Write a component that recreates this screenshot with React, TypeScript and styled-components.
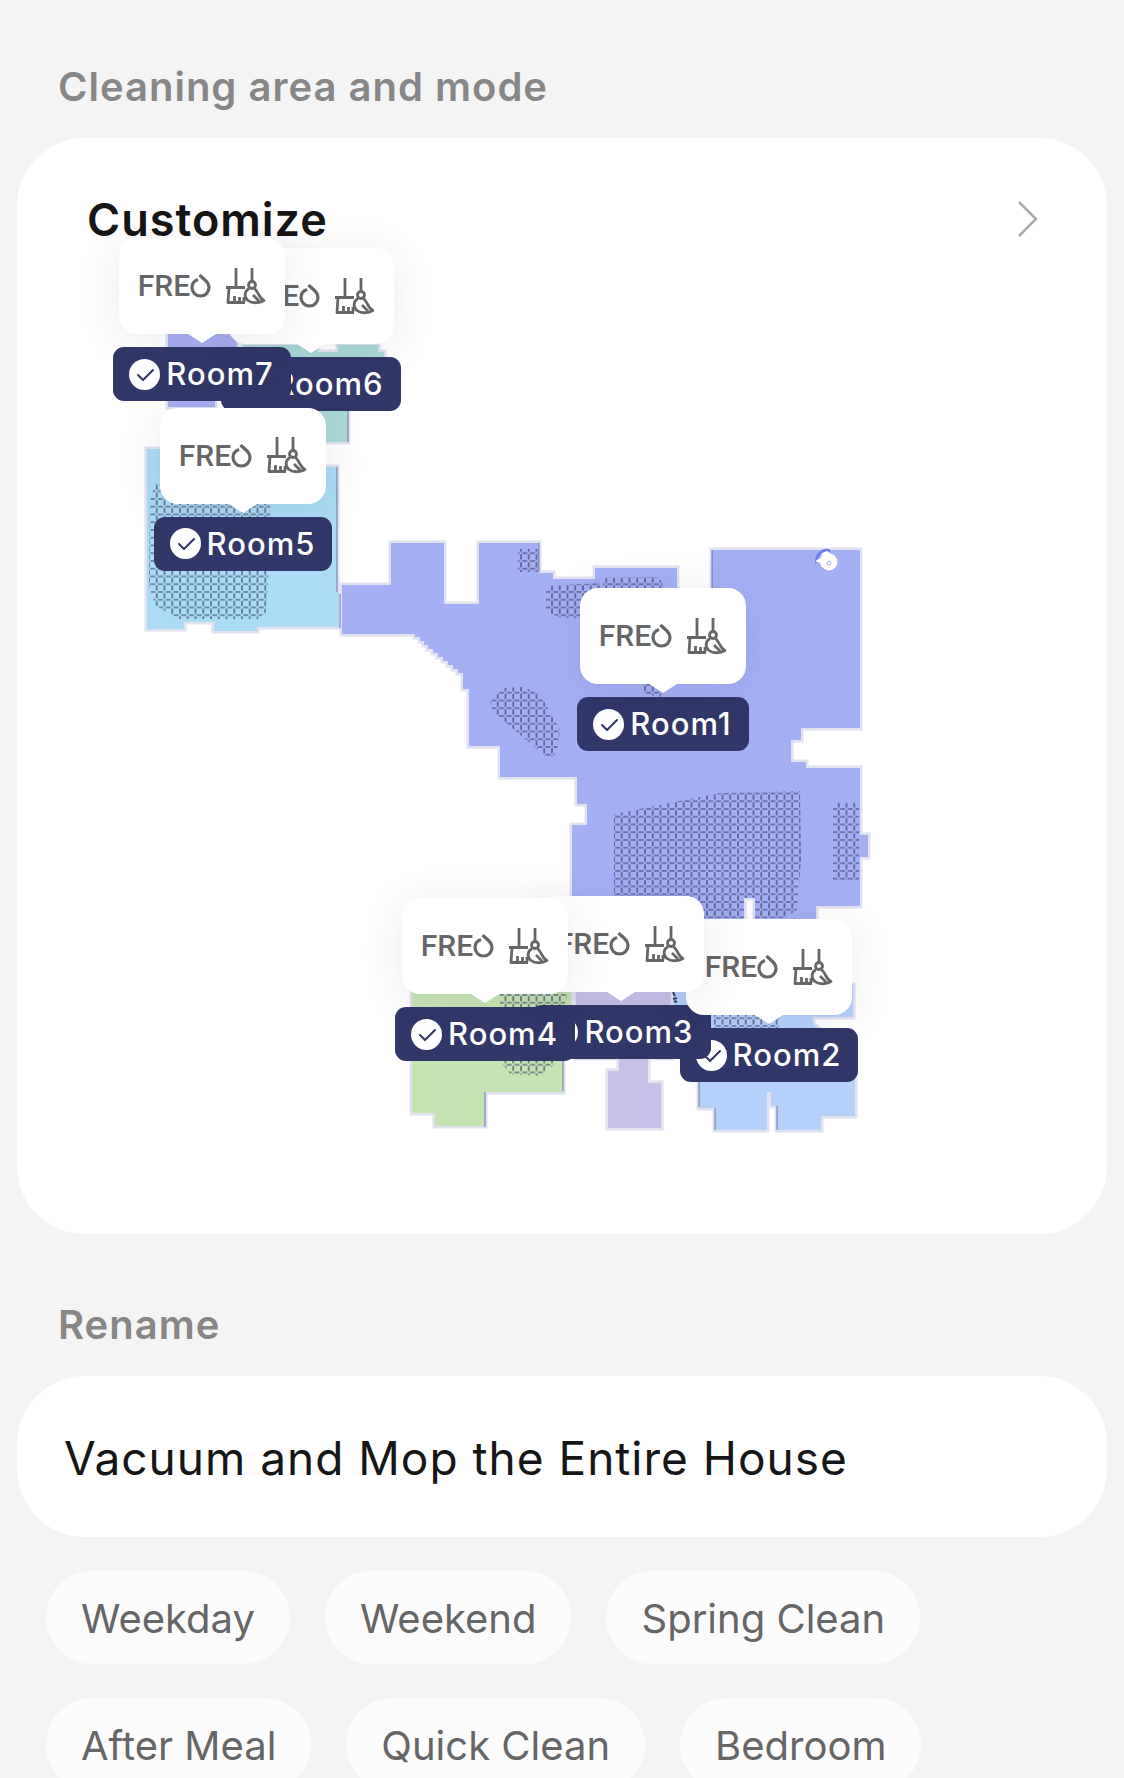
import React from 'react';
import styled, { createGlobalStyle } from 'styled-components';

const GlobalStyle = createGlobalStyle`
  * {
    box-sizing: border-box;
  }
  body {
    margin: 0;
    background: #f4f4f4;
    font-family: Inter, 'Liberation Sans', sans-serif;
  }
  button,
  input {
    font-family: inherit;
    border: none;
    margin: 0;
  }
`;

const Page = styled.main`
  padding: 63px 17px 34px;
`;

const Section = styled.section`
  & + & {
    margin-top: 67px;
  }
`;

const sectionTitle = `
  display: block;
  margin: 0 0 27px;
  padding: 0 41px;
  font-size: 40px;
  line-height: 48px;
  font-weight: 600;
  letter-spacing: 1px;
  color: #878787;
`;

const SectionTitle = styled.h2`
  ${sectionTitle}
`;

const SectionLabel = styled.label`
  ${sectionTitle}
`;

const Card = styled.div`
  background: #fff;
  border-radius: 68px;
`;

const CardHeader = styled.button`
  display: flex;
  align-items: center;
  justify-content: space-between;
  width: 100%;
  padding: 54px 68px 2px 70px;
  background: none;
  font-size: 45px;
  line-height: 56px;
  font-weight: 600;
  letter-spacing: 1px;
  color: #161616;
  text-align: left;
`;

const MapArea = styled.div`
  position: relative;
  > svg {
    display: block;
    width: 100%;
  }
`;

// zero width, so the callout and the tag both centre on the pin's x
const Pin = styled.div`
  position: absolute;
  display: flex;
  flex-direction: column;
  align-items: center;
  gap: 13px;
  width: 0;
`;

const Callout = styled.div`
  position: relative;
  z-index: 2;
  flex: none;
  display: flex;
  align-items: center;
  justify-content: center;
  gap: 15px;
  width: 166px;
  height: 96px;
  border-radius: 18px;
  background: #fff;
  box-shadow: 0 6px 44px rgba(40, 40, 90, 0.09);
  color: #666;
  &::after {
    content: '';
    position: absolute;
    top: 100%;
    left: 50%;
    margin-left: -14px;
    border: 14px solid transparent;
    border-top: 9px solid #fff;
    border-bottom: 0;
  }
`;

const Freo = styled.span`
  display: flex;
  align-items: center;
  font-family: Roboto, sans-serif;
  font-size: 30px;
  line-height: 32px;
  font-weight: 500;
`;

const RoomTag = styled.label`
  position: relative;
  z-index: 1;
  flex: none;
  display: flex;
  align-items: center;
  gap: 6px;
  height: 54px;
  padding: 0 17px 0 16px;
  border-radius: 11px;
  background: #313768;
  color: #fff;
  font-size: 31px;
  line-height: 36px;
  font-weight: 500;
  letter-spacing: 1px;
`;

const RoomCheck = styled.input`
  appearance: none;
  width: 31px;
  height: 31px;
  border-radius: 50%;
  background: #fff
    url("data:image/svg+xml,%3Csvg xmlns='http://www.w3.org/2000/svg' viewBox='0 0 31 31' fill='none' stroke='%23313768' stroke-width='2' stroke-linecap='round' stroke-linejoin='round'%3E%3Cpath d='M9 16l5 5 10-10'/%3E%3C/svg%3E");
`;

const NameInput = styled.input`
  display: block;
  width: 100%;
  height: 161px;
  padding: 2px 47px 0;
  border-radius: 68px;
  background: #fff;
  font-size: 46px;
  letter-spacing: 1px;
  color: #161616;
  outline: none;
`;

const Chips = styled.div`
  display: flex;
  flex-wrap: wrap;
  gap: 34px 35px;
  margin-top: 34px;
  padding: 0 29px;
`;

const Chip = styled.button`
  height: 93px;
  padding: 2px 35px 0;
  border-radius: 47px;
  background: #fcfcfc;
  font-size: 40px;
  color: #666;
`;

// map space: the drawing and the pins share these coordinates
const MAP = { x: 17, y: 250, width: 1090, height: 984 };

const rooms = [
  { name: 'Room1', x: 663, y: 588 },
  { name: 'Room2', x: 769, y: 919 },
  { name: 'Room3', x: 621, y: 896 },
  { name: 'Room4', x: 485, y: 898 },
  { name: 'Room5', x: 243, y: 408 },
  { name: 'Room6', x: 311, y: 248 },
  { name: 'Room7', x: 202, y: 238 },
];

const areas = [
  { fill: '#a8aef0', points: '168,320 230,320 237,345 237,375 215,375 215,407 168,407' },
  {
    fill: '#a9d9d6',
    points:
      '243,345 318,345 318,352 338,352 338,345 378,345 378,352 384,352 384,400 348,400 348,442 243,442',
  },
  {
    fill: '#abdbf5',
    points:
      '147,449 200,449 200,467 337,467 337,592 339,592 339,627 257,627 257,631 214,631 214,622 184,622 184,629 147,629',
  },
  {
    fill: '#a4aff4',
    points:
      '342,585 391,585 391,543 444,543 444,604 479,604 479,543 539,543 539,573 553,573 553,579 595,579 595,568 677,568 677,620 712,620 712,550 860,550 860,728 801,728 801,740 791,740 791,762 806,762 806,768 860,768 860,835 868,835 868,857 860,857 860,906 816,906 816,920 755,920 755,898 744,898 744,920 572,920 572,825 587,825 587,804 577,804 577,777 500,777 500,746 469,746 469,689 463,689 463,673 458,673 458,669 453,669 453,665 448,665 448,661 443,661 443,657 438,657 438,653 433,653 433,649 428,649 428,645 424,645 424,641 420,641 420,637 415,637 415,634 342,634',
  },
  {
    fill: '#c5e4b2',
    points: '412,990 571,990 571,1006 563,1006 563,1092 485,1092 485,1126 435,1126 435,1113 412,1113',
  },
  {
    fill: '#c8c0e8',
    points: '576,990 672,990 672,1058 648,1058 648,1083 661,1083 661,1128 608,1128 608,1071 619,1071 619,1058 576,1058',
  },
  {
    fill: '#b5d1fa',
    points:
      '673,985 853,985 853,1017 813,1017 813,1024 855,1060 855,1116 821,1116 821,1130 777,1130 777,1106 771,1106 771,1092 767,1092 767,1130 715,1130 715,1108 699,1108 699,1050 673,1050',
  },
];

const carpets = [
  '155,484 270,490 270,550 266,612 258,619 178,619 155,605 149,585 150,500',
  '518,549 538,549 538,572 518,572',
  '546,586 600,583 600,618 562,618 546,612',
  '603,578 657,577 663,583 663,592 603,592',
  '490,702 503,688 523,687 540,694 560,730 557,753 548,759 530,743 493,712',
  '614,814 660,805 720,793 800,791 801,860 797,910 784,918 755,918 755,898 744,898 744,918 614,918',
  '833,803 859,803 859,880 833,880',
  '643,684 668,684 660,697 645,694',
  '500,994 568,994 562,1012 554,1065 540,1076 510,1074 500,1060',
  '714,1012 779,1012 779,1028 714,1028',
];

// walls that are drawn darker than the soft room outline
const walls =
  'M348 405V442M337 467V592M340 594V628M539 543V572M712 550V600M485 1092V1127M563 1060V1091M699 1080V1107M715 1108V1130M777 1106V1130';

function FloorPlan() {
  return (
    <svg viewBox={`${MAP.x} ${MAP.y} ${MAP.width} ${MAP.height}`} aria-hidden="true">
      <defs>
        <pattern id="carpet" x="613" y="808" width="7.75" height="7.75" patternUnits="userSpaceOnUse">
          <path d="M2.300 1H7.200M1 2.300V7.200" stroke="#2f365c" strokeWidth="1.1" fill="none" />
        </pattern>
      </defs>
      {areas.map(area => (
        <polygon
          key={area.fill}
          points={area.points}
          fill={area.fill}
          stroke="#e0e2f0"
          strokeWidth="5"
          paintOrder="stroke"
        />
      ))}
      <path d={walls} stroke="#6d76ac" strokeWidth="1" />
      {carpets.map(points => (
        <polygon key={points} points={points} fill="url(#carpet)" />
      ))}
      <path d="M673 992l2 4m-2 3l4-1m-3 3l3 1" stroke="#39406b" strokeWidth="2" />
      <path d="M817 563a10 10 0 0 1 13-12" stroke="#6f7df0" strokeWidth="3" fill="none" />
      <path d="M817 561l5-3 1-4 4-2 5 5-3 11-7-2-1-4z" fill="#fff" stroke="#fff" strokeWidth="2" strokeLinejoin="round" />
      <circle cx="829" cy="562" r="8.500" fill="#fff" />
      <circle cx="829" cy="563" r="2" fill="none" stroke="#a4aff4" />
    </svg>
  );
}

function DropRing() {
  return (
    <svg width="21" height="24" viewBox="0 0 21 24" fill="none" stroke="currentColor" strokeWidth="3.200">
      <path d="M8 5.500C4 7 2 10 2 13.500a8.500 8.500 0 0 0 17 0C19 9 16 7 9.500 1" />
    </svg>
  );
}

function MopIcon() {
  return (
    <svg
      width="40"
      height="37"
      viewBox="0 0 40 37"
      fill="none"
      stroke="currentColor"
      strokeWidth="2.8"
      strokeLinejoin="round"
    >
      <path d="M10 0v19M0 19.500h19M3 19.500L2 34.500h17M8.500 34v-6M13.500 34v-5M18 34v-5" />
      <path d="M26 0v13" />
      <circle cx="26" cy="17" r="3.500" />
      <path d="M23 20.500c-5 3-5 9-1 12 4 3 11 3 16 0-5-2-5-8-9.500-12M27 27l6 6" />
    </svg>
  );
}

function RoomPin({ name, x, y }: { name: string; x: number; y: number }) {
  return (
    <Pin
      style={{
        left: `${((x - MAP.x) / MAP.width) * 100}%`,
        top: `${((y - MAP.y) / MAP.height) * 100}%`,
      }}
    >
      <Callout>
        <Freo>
          FRE
          <DropRing />
        </Freo>
        <MopIcon />
      </Callout>
      <RoomTag>
        <RoomCheck type="checkbox" defaultChecked />
        {name}
      </RoomTag>
    </Pin>
  );
}

const presets = ['Weekday', 'Weekend', 'Spring Clean', 'After Meal', 'Quick Clean', 'Bedroom'];

export default function App() {
  return (
    <Page>
      <GlobalStyle />
      <Section>
        <SectionTitle>Cleaning area and mode</SectionTitle>
        <Card>
          <CardHeader type="button">
            Customize
            <svg width="22" height="38" viewBox="0 0 22 38" fill="none" stroke="#a9a9a9" strokeWidth="2.500">
              <path d="M2 1l17 17L2 35" />
            </svg>
          </CardHeader>
          <MapArea>
            <FloorPlan />
            {rooms.map(room => (
              <RoomPin key={room.name} {...room} />
            ))}
          </MapArea>
        </Card>
      </Section>
      <Section>
        <SectionLabel htmlFor="plan-name">Rename</SectionLabel>
        <NameInput id="plan-name" defaultValue="Vacuum and Mop the Entire House" />
        <Chips>
          {presets.map(preset => (
            <Chip key={preset} type="button">
              {preset}
            </Chip>
          ))}
        </Chips>
      </Section>
    </Page>
  );
}
